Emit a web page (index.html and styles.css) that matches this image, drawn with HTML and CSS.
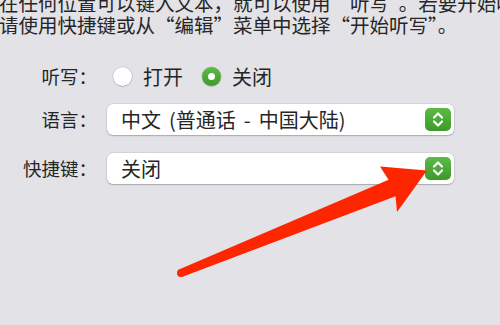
FILE: index.html
```html
<!DOCTYPE html>
<html lang="zh-CN">
<head>
<meta charset="utf-8">
<link rel="stylesheet" href="styles.css">
</head>
<body>
<div class="pane">
  <div class="intro">
    <div class="line">在任何位置可以键入文本，就可以使用“听写”。若要开始听写，</div>
    <div class="line">请使用快捷键或从“编辑”菜单中选择“开始听写”。</div>
  </div>
  <div class="form">
    <div class="label">听写：</div>
    <div class="radios">
      <span class="radio"></span><span class="rtext">打开</span>
      <span class="radio on"></span><span class="rtext">关闭</span>
    </div>
    <div class="label">语言：</div>
    <div class="popup">
      <span class="ptext">中文 (普通话 - 中国大陆)</span>
      <span class="stepper"><svg width="26" height="23" viewBox="0 0 26 23"><path d="M9 9.5 L13 5.5 L17 9.5 M9 13.5 L13 17.5 L17 13.5" fill="none" stroke="#fff" stroke-width="2.2" stroke-linecap="round" stroke-linejoin="round"/></svg></span>
    </div>
    <div class="label l3">快捷键：</div>
    <div class="popup p3">
      <span class="ptext">关闭</span>
      <span class="stepper"><svg width="26" height="23" viewBox="0 0 26 23"><path d="M9 9.5 L13 5.5 L17 9.5 M9 13.5 L13 17.5 L17 13.5" fill="none" stroke="#fff" stroke-width="2.2" stroke-linecap="round" stroke-linejoin="round"/></svg></span>
    </div>
  </div>
  <svg class="arrow" width="500" height="325" viewBox="0 0 500 325">
    <polygon points="179.5,269.3 388.5,179.7 380,166.5 427,170.5 397,212 395.5,196.3 182.5,276.7" fill="#fe2600"/>
    <circle cx="181" cy="273" r="4" fill="#fe2600"/>
  </svg>
</div>
</body>
</html>
```
FILE: styles.css
```css
html, body {
  margin: 0;
  padding: 0;
  background: #e3e2e7;
}
.pane {
  position: relative;
  width: 500px;
  height: 325px;
  overflow: hidden;
  font-family: "Noto Sans CJK SC", "Noto Sans", sans-serif;
  color: #262626;
}
.intro {
  margin: -8px 0 0 -1px;
  font-size: 19.5px;
  line-height: 22px;
  font-feature-settings: "fwid" 1;
}
.line {
  white-space: nowrap;
}
.form {
  display: grid;
  grid-template-columns: 97px 347px;
  column-gap: 10px;
  row-gap: 12px;
  margin-top: 25px;
  font-size: 18.5px;
}
.label {
  text-align: right;
  height: 31px;
  line-height: 31px;
}
.l3, .p3 {
  margin-top: 6px;
}
.radios {
  display: flex;
  align-items: center;
  height: 31px;
  padding-left: 6px;
  font-size: 20px;
}
.radio {
  width: 19px;
  height: 19px;
  border-radius: 50%;
  background: #fff;
  box-shadow: 0 0 0 0.5px rgba(0,0,0,0.18), 0 0.5px 1px rgba(0,0,0,0.2);
  position: relative;
}
.radio.on {
  background: linear-gradient(#5dbb48, #3d9b2a);
  margin-left: 19px;
}
.radio.on::after {
  content: "";
  position: absolute;
  left: 6px;
  top: 6px;
  width: 7px;
  height: 7px;
  border-radius: 50%;
  background: #fff;
}
.rtext {
  margin-left: 11px;
}
.popup {
  display: flex;
  align-items: center;
  justify-content: space-between;
  height: 31px;
  background: #fff;
  border-radius: 6px;
  box-shadow: 0 0 0 0.5px rgba(0,0,0,0.12), 0 1px 1.5px rgba(0,0,0,0.22);
  padding: 0 3px 0 14px;
}
.ptext {
  font-size: 20px;
  word-spacing: 3.5px;
}
.stepper {
  display: block;
  width: 26px;
  height: 23px;
  border-radius: 5px;
  background: linear-gradient(#5cba47, #3c9a2a);
}
.stepper svg {
  display: block;
}
.arrow {
  position: absolute;
  left: 0;
  top: 0;
}
```
